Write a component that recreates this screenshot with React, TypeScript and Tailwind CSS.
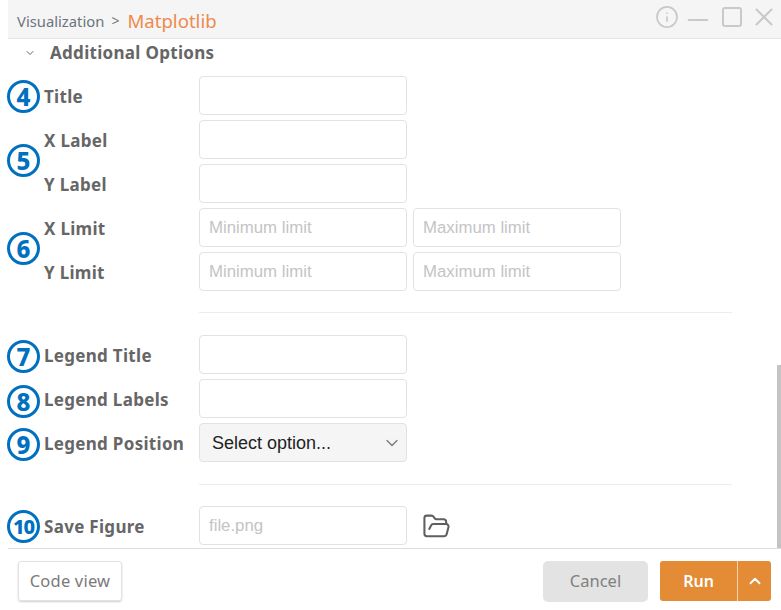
import { ChevronDown, ChevronUp, FolderOpen, Info, Minus, Square, X } from 'lucide-react';

const labelFont = "font-['Noto_Sans',sans-serif]";
const inputFont = "font-['Liberation_Sans',sans-serif]";

function Badge({ n, top }: { n: number; top: number }) {
  return (
    <div
      className={`absolute left-[7px] w-[33px] h-[33px] rounded-full border-[3px] border-[#0070c0] flex items-center justify-center text-[#0070c0] font-extrabold ${labelFont} ${n > 9 ? 'text-[20px] tracking-[-1px]' : 'text-[24px]'}`}
      style={{ top }}
    >
      {n}
    </div>
  );
}

function Field({ placeholder }: { placeholder?: string }) {
  return (
    <div
      className={`w-[208px] h-[39px] border border-[#e2e2e2] rounded-[4px] bg-white flex items-center px-[9px] text-[16.8px] text-[#c4c4c4] ${inputFont}`}
    >
      {placeholder}
    </div>
  );
}

function Row({ label, children }: { label: string; children: React.ReactNode }) {
  return (
    <div className="flex items-center h-[39px]">
      <div className={`w-[155px] pt-[2px] text-[17px] tracking-[0.3px] font-bold text-[#666666] ${labelFont}`}>{label}</div>
      <div className="flex items-center gap-[6px]">{children}</div>
    </div>
  );
}

export default function App() {
  return (
    <div className="relative w-[781px] h-[610px] bg-white overflow-hidden">
      {/* Title bar */}
      <div className={`ml-2 h-[39px] bg-[#f5f5f5] border-b border-[#e6e6e6] flex items-center pl-[9px] pr-[2px] ${labelFont}`}>
        <div className="flex items-center mt-[4px]">
          <span className="text-[14.8px] text-[#6b747d]">Visualization</span>
          <span className="text-[14px] text-[#6b747d] ml-[7px]">&gt;</span>
          <span className="text-[18.6px] text-[#ee8a4b] ml-[8px]">Matplotlib</span>
        </div>
        <div className="ml-auto flex items-center text-[#c9c9c9] mb-[4px]">
          <Info size={24} strokeWidth={1.75} />
          <Minus size={32} strokeWidth={1.5} className="ml-[3px] mt-[6px]" />
          <Square size={24} strokeWidth={2} className="ml-[6px]" />
          <X size={30} strokeWidth={1.6} className="ml-[5px]" />
        </div>
      </div>

      {/* Section heading */}
      <div className={`h-[27px] flex items-center pl-[24px] ${labelFont}`}>
        <ChevronDown size={12} className="text-[#666666]" />
        <span className="ml-[14px] text-[17px] tracking-[0.3px] font-bold text-[#666666]">Additional Options</span>
      </div>

      {/* Form */}
      <div className="pl-[44px] pt-[10px] flex flex-col gap-[5px]">
        <Row label="Title"><Field /></Row>
        <Row label="X Label"><Field /></Row>
        <Row label="Y Label"><Field /></Row>
        <Row label="X Limit">
          <Field placeholder="Minimum limit" />
          <Field placeholder="Maximum limit" />
        </Row>
        <Row label="Y Limit">
          <Field placeholder="Minimum limit" />
          <Field placeholder="Maximum limit" />
        </Row>
      </div>
      <div className="ml-[199px] w-[533px] mt-[21px] mb-[22px] h-px bg-[#ececec]" />
      <div className="pl-[44px] flex flex-col gap-[5px]">
        <Row label="Legend Title"><Field /></Row>
        <Row label="Legend Labels"><Field /></Row>
        <Row label="Legend Position">
          <div className={`w-[208px] h-[39px] border border-[#e2e2e2] rounded-[4px] bg-[#f5f5f5] flex items-center justify-between pl-[12px] pr-[4px] text-[18px] text-[#222222] ${inputFont}`}>
            <span className="mt-[1px]">Select option...</span>
            <ChevronDown size={20} strokeWidth={1.5} className="text-[#777777]" />
          </div>
        </Row>
      </div>
      <div className="ml-[199px] w-[533px] mt-[22px] mb-[21px] h-px bg-[#ececec]" />
      <div className="pl-[44px]">
        <Row label="Save Figure">
          <Field placeholder="file.png" />
          <FolderOpen size={29} strokeWidth={1.7} className="text-[#5f5f5f] ml-[9px] mt-[1px]" />
        </Row>
      </div>

      {/* Footer */}
      <div className={`ml-2 mt-[3px] border-t border-[#dddddd] h-[62px] flex items-start pt-[12px] pl-[10px] pr-[10px] ${labelFont}`}>
        <div className="h-[40px] w-[104px] border border-[#e2e2e2] rounded-[3px] shadow-[0_1px_2px_rgba(0,0,0,0.2)] flex items-center justify-center text-[16.5px] tracking-[0.2px] text-[#7a7a7a]">
          Code view
        </div>
        <div className="ml-auto h-[41px] w-[105px] bg-[#e3e3e3] rounded-[5px] flex items-center justify-center text-[16.5px] text-[#808080]">
          Cancel
        </div>
        <div className="ml-[12px] h-[40px] w-[111px] bg-[#e38b35] rounded-[3px] flex">
          <div className="w-[78px] flex items-center justify-center text-[16px] font-semibold text-white border-r border-[#f5d5b0]">Run</div>
          <div className="flex-1 flex items-center justify-center text-white">
            <ChevronUp size={18} strokeWidth={2.5} />
          </div>
        </div>
      </div>

      {/* Scrollbar thumb */}
      <div className="absolute right-0 top-[365px] w-[4px] h-[183px] bg-[#c4c4c4]" />

      {/* Annotation badges */}
      <Badge n={4} top={80} />
      <Badge n={5} top={144} />
      <Badge n={6} top={232} />
      <Badge n={7} top={340} />
      <Badge n={8} top={385} />
      <Badge n={9} top={428} />
      <Badge n={10} top={510} />
    </div>
  );
}
